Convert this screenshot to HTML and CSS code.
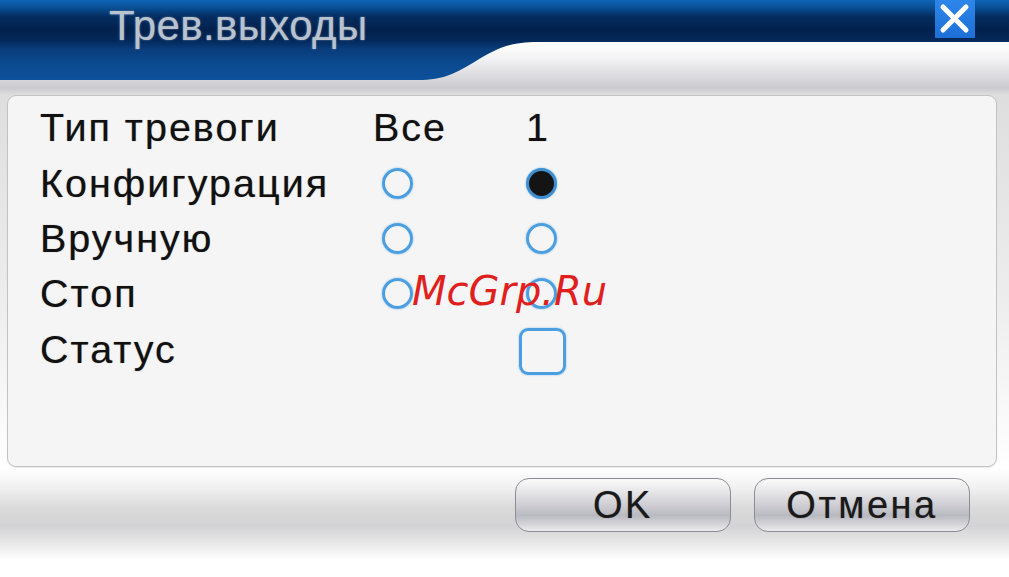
FILE: index.html
```html
<!DOCTYPE html>
<html lang="ru">
<head>
<meta charset="utf-8">
<title>Трев.выходы</title>
<link rel="stylesheet" href="styles.css">
</head>
<body>
<div class="dialog">
  <header class="titlebar">
    <svg class="titlebar-bg" width="1009" height="84" viewBox="0 0 1009 84" aria-hidden="true">
      <defs>
        <linearGradient id="tb" x1="0" y1="0" x2="0" y2="84" gradientUnits="userSpaceOnUse">
          <stop offset="0" stop-color="#0d64b4"/>
          <stop offset="0.09" stop-color="#0a4f96"/>
          <stop offset="0.2" stop-color="#042c60"/>
          <stop offset="0.36" stop-color="#02214c"/>
          <stop offset="0.48" stop-color="#03285a"/>
          <stop offset="0.58" stop-color="#093c7a"/>
          <stop offset="0.75" stop-color="#0b4a90"/>
          <stop offset="1" stop-color="#0c529e"/>
        </linearGradient>
      </defs>
      <path d="M0 0 H1009 V42 H538 C508 42 496 49 476 61 C456 73 444 80 418 80 H0 Z" fill="url(#tb)"/>
    </svg>
    <h1 class="title">Трев.выходы</h1>
    <button class="close" type="button" aria-label="Закрыть">
      <svg width="40" height="38" viewBox="0 0 40 38" aria-hidden="true">
        <path d="M8 7 L31 30 M31 7 L8 30" stroke="#ffffff" stroke-width="5" stroke-linecap="round"/>
      </svg>
    </button>
  </header>

  <section class="panel">
    <div class="grid">
      <span class="label">Тип тревоги</span>
      <span class="label col-all">Все</span>
      <span class="label col-one">1</span>

      <span class="label">Конфигурация</span>
      <span class="radio r-all"></span>
      <span class="radio checked r-one"></span>

      <span class="label">Вручную</span>
      <span class="radio r-all"></span>
      <span class="radio r-one"></span>

      <span class="label">Стоп</span>
      <span class="radio r-all"></span>
      <span class="radio r-one"></span>

      <span class="label">Статус</span>
      <span class="empty"></span>
      <span class="checkbox"></span>
    </div>
    <span class="watermark">McGrp.Ru</span>
  </section>

  <footer class="buttons">
    <button class="btn" type="button">OK</button>
    <button class="btn" type="button">Отмена</button>
  </footer>
</div>
</body>
</html>
```

FILE: styles.css
```css
html, body {
  margin: 0;
  padding: 0;
}

body {
  width: 1009px;
  height: 577px;
  overflow: hidden;
  background: #ffffff;
  font-family: "Liberation Sans", Arial, sans-serif;
}

.dialog {
  width: 1009px;
  height: 577px;
  display: flex;
  flex-direction: column;
  background: linear-gradient(to bottom,
    #ffffff 0px, #ffffff 44px, #f3f3f5 58px, #d9d9dd 78px, #cbcbcf 88px, #dedede 95px,
    #ededed 300px,
    #ffffff 468px, #f2f2f2 486px, #dadada 508px, #d3d3d5 526px, #e9e9e9 544px, #ffffff 560px, #ffffff 577px);
}

.titlebar {
  position: relative;
  height: 84px;
  display: flex;
  align-items: flex-start;
  flex-shrink: 0;
}

.titlebar-bg {
  position: absolute;
  left: 0;
  top: 0;
}

.title {
  position: relative;
  margin: 0;
  padding: 5px 0 0 109px;
  font-size: 42px;
  line-height: 42px;
  font-weight: normal;
  letter-spacing: 0.4px;
  color: #b9c3cf;
  text-shadow: 0 0 2px rgba(190, 200, 215, 0.6);
}

.close {
  position: relative;
  margin: 0 34px 0 auto;
  padding: 0;
  width: 40px;
  height: 38px;
  border: none;
  background: linear-gradient(to bottom, #2e86ea, #1c6fd6);
  display: flex;
}

.panel {
  position: relative;
  box-sizing: border-box;
  margin: 11px 0 0 7px;
  width: 990px;
  height: 372px;
  flex-shrink: 0;
  background: #f5f5f5;
  border: 1px solid #c3c3c6;
  border-radius: 9px;
  box-shadow: 0 1px 1px rgba(0, 0, 0, 0.08);
  padding: 4px 0 0 32px;
}

.grid {
  display: grid;
  grid-template-columns: 333px 145px 1fr;
  grid-auto-rows: 55.4px;
  align-items: center;
  justify-items: start;
}

.label {
  font-size: 39.5px;
  line-height: 55px;
  letter-spacing: 2px;
  color: #111111;
  text-shadow: 0 0 1px rgba(0, 0, 0, 0.45);
}

.col-one {
  margin-left: 8px;
}

.radio {
  box-sizing: border-box;
  width: 31px;
  height: 31px;
  border-radius: 50%;
  border: 3px solid #4b9fe1;
  box-shadow: 0 0 2px rgba(75, 160, 225, 0.7);
}

.r-all {
  margin-left: 9px;
}

.r-one {
  margin-left: 8px;
}

.radio.checked {
  background: #141414;
  border-color: #3f8fd0;
}

.checkbox {
  box-sizing: border-box;
  width: 47px;
  height: 47px;
  margin-left: 1px;
  margin-top: 4px;
  border: 3px solid #4b9fe1;
  border-radius: 9px;
  box-shadow: 0 0 2px rgba(75, 160, 225, 0.7);
}

.watermark {
  position: absolute;
  left: 404px;
  top: 171px;
  font-family: "DejaVu Sans", sans-serif;
  font-style: italic;
  font-size: 40px;
  line-height: 48px;
  color: #e01f1f;
}

.buttons {
  display: flex;
  justify-content: flex-end;
  gap: 23px;
  padding: 11px 39px 0 0;
}

.btn {
  box-sizing: border-box;
  width: 216px;
  height: 54px;
  padding: 0;
  border: 1.5px solid #8e8a96;
  border-radius: 14px;
  background: linear-gradient(to bottom,
    #fafafa 0%, #e6e6e9 25%, #c9c9cf 55%, #b9b9c1 70%, #d6d6da 88%, #ececee 100%);
  font-family: "Liberation Sans", Arial, sans-serif;
  font-size: 38px;
  letter-spacing: 2.5px;
  color: #1a1a1a;
  line-height: 50px;
  text-shadow: 0 0 1px rgba(0, 0, 0, 0.4);
}
```
